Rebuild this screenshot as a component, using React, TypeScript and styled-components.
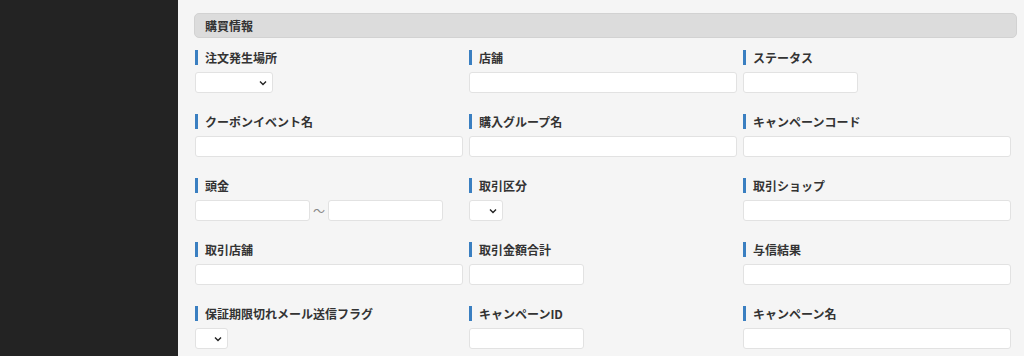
import styled, { createGlobalStyle } from "styled-components";

const GlobalStyle = createGlobalStyle`
    html, body {
        margin: 0;
        padding: 0;
        background: #f5f5f5;
        font-family: "Noto Sans CJK JP", "Noto Sans", "Liberation Sans", sans-serif;
    }
`;

const Page = styled.div`
    display: flex;
    width: 1024px;
    height: 356px;
    overflow: hidden;
`;

const Sidebar = styled.aside`
    width: 178px;
    flex-shrink: 0;
    background: #232323;
`;

const Main = styled.main`
    flex: 1;
    background: #f5f5f5;
    padding: 13px 7px 0 16px;
`;

const SectionHeader = styled.h2`
    box-sizing: border-box;
    margin: 0;
    height: 25px;
    display: flex;
    align-items: center;
    padding-left: 10px;
    padding-bottom: 1px;
    background: #dcdcdc;
    border: 1px solid #d2d2d2;
    border-radius: 5px;
    font-size: 12px;
    line-height: 15px;
    font-weight: bold;
    color: #333;
`;

const FieldGrid = styled.div`
    display: grid;
    grid-template-columns: 274px 274px 273px;
    row-gap: 21px;
    margin-top: 12px;
`;

const Field = styled.div`
    display: flex;
    flex-direction: column;
    align-items: flex-start;
    padding-left: 1px;
`;

const Label = styled.label`
    height: 15px;
    line-height: 15px;
    display: flex;
    align-items: center;
    padding-left: 7px;
    border-left: 3px solid #3a7fc1;
    font-size: 12px;
    font-weight: bold;
    color: #333;
    margin-bottom: 7px;
`;

const Input = styled.div<{ $w: number }>`
    box-sizing: border-box;
    width: ${(p) => p.$w}px;
    height: 21px;
    background: #fff;
    border: 1px solid #e2e2e2;
    border-radius: 3px;
`;

const Select = styled(Input)`
    display: flex;
    align-items: center;
    justify-content: flex-end;
    padding-right: 5px;
    color: #222;
`;

const Range = styled.div`
    display: flex;
    align-items: center;
    gap: 3px;
`;

const Tilde = styled.span`
    font-size: 12px;
    line-height: 15px;
    color: #888;
    width: 12px;
    text-align: center;
`;

function Chevron() {
    return (
        <svg width="8" height="6" viewBox="0 0 8 6">
            <path d="M1 1.5 L4 4.5 L7 1.5" fill="none" stroke="#222" strokeWidth="1.4" />
        </svg>
    );
}

type Kind = { label: string; control: "text" | "select" | "range"; w?: number };

const fields: Kind[] = [
    { label: "注文発生場所", control: "select", w: 78 },
    { label: "店舗", control: "text", w: 268 },
    { label: "ステータス", control: "text", w: 115 },
    { label: "クーポンイベント名", control: "text", w: 268 },
    { label: "購入グループ名", control: "text", w: 268 },
    { label: "キャンペーンコード", control: "text", w: 268 },
    { label: "頭金", control: "range", w: 115 },
    { label: "取引区分", control: "select", w: 34 },
    { label: "取引ショップ", control: "text", w: 268 },
    { label: "取引店舗", control: "text", w: 268 },
    { label: "取引金額合計", control: "text", w: 115 },
    { label: "与信結果", control: "text", w: 268 },
    { label: "保証期限切れメール送信フラグ", control: "select", w: 33 },
    { label: "キャンペーンID", control: "text", w: 115 },
    { label: "キャンペーン名", control: "text", w: 268 },
];

function App() {
    return (
        <Page>
            <GlobalStyle />
            <Sidebar />
            <Main>
                <SectionHeader>購買情報</SectionHeader>
                <FieldGrid>
                    {fields.map((f) => (
                        <Field key={f.label}>
                            <Label>{f.label}</Label>
                            {f.control === "text" && <Input $w={f.w ?? 268} />}
                            {f.control === "select" && (
                                <Select $w={f.w ?? 78}>
                                    <Chevron />
                                </Select>
                            )}
                            {f.control === "range" && (
                                <Range>
                                    <Input $w={115} />
                                    <Tilde>〜</Tilde>
                                    <Input $w={115} />
                                </Range>
                            )}
                        </Field>
                    ))}
                </FieldGrid>
            </Main>
        </Page>
    );
}

export default App;
